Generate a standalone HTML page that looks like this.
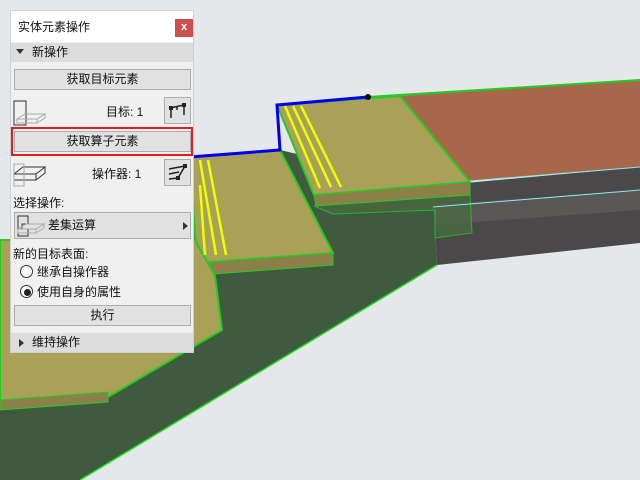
<!DOCTYPE html>
<html><head><meta charset="utf-8"><style>
*{margin:0;padding:0;box-sizing:border-box}
html,body{width:640px;height:480px;overflow:hidden}
body{background:#e4e8ea;position:relative;font-family:"Liberation Sans","Noto Sans CJK SC",sans-serif;font-size:12px;color:#111}
svg.bg{position:absolute;left:0;top:0}
.p{position:absolute;left:10px;top:10px;width:184px;height:343px;background:#f0f0f0;border:1px solid #d0d0d0}
.a{position:absolute}
.btn{position:absolute;left:3px;width:177px;height:21px;background:#e1e1e1;border:1px solid #adadad;text-align:center;line-height:19px}
.hdr{position:absolute;left:0;width:182px;height:19px;background:#dcdcdc;line-height:19px;padding-left:21px}
.ib{position:absolute;left:153px;width:27px;height:27px;background:#e1e1e1;border:1px solid #adadad}
.rad{position:absolute;left:9px;width:13px;height:13px;border:1px solid #333;border-radius:50%;background:#fff}
</style></head><body>
<svg class="bg" width="640" height="480" viewBox="0 0 640 480">
<polygon points="190,157 280,150 433,186 437,265 80,480 0,480 0,250 190,240" fill="#3f5a3e"/>
<polygon points="400,96 640,80 640,167 470,181" fill="#a8674a"/>
<polygon points="433,186 640,167 640,243 437,265" fill="#4a4848"/>
<polygon points="435,205 640,190 640,210 435,225" fill="#5a5756"/>
<polygon points="277,105 400,96 470,182 314,195" fill="#a9a157" stroke="#22cc22" stroke-width="2"/>
<polygon points="314,195 470,182 470,195 316,206" fill="#8d7f4a" stroke="#22cc22"/>
<polygon points="314,206 470,195 472,233 435,238 435,210 333,214" fill="#4a6a40" stroke="#22cc22" opacity=".8"/>
<polygon points="190,157 280,150 333,253 197,263" fill="#a9a157" stroke="#22cc22" stroke-width="2"/>
<polygon points="197,263 333,253 333,265 200,275" fill="#8d7f4a" stroke="#22cc22"/>
<polygon points="0,240 195,240 215,276 222,330 108,397 0,405" fill="#a9a157" stroke="#22cc22" stroke-width="2"/>
<polygon points="0,400 108,392 108,402 0,410" fill="#8d7f4a" stroke="#22cc22"/>
<line x1="437" y1="265" x2="80" y2="480" stroke="#22dd22" stroke-width="1.5"/>
<g stroke="#eeff00" stroke-width="2.5">
<line x1="285" y1="106" x2="320" y2="188"/><line x1="293" y1="106" x2="331" y2="187"/><line x1="301" y1="106" x2="341" y2="187"/>
<line x1="200" y1="160" x2="216" y2="255"/><line x1="208" y1="160" x2="226" y2="255"/><line x1="200" y1="185" x2="205" y2="255"/>
</g>
<polyline points="190,157 280,150 277,105 368,97" fill="none" stroke="#0000ee" stroke-width="3"/>
<line x1="368" y1="97" x2="640" y2="80" stroke="#22cc22" stroke-width="2"/>
<circle cx="368" cy="97" r="3" fill="#000"/>
<line x1="470" y1="181" x2="640" y2="167" stroke="#8ee" stroke-width="1"/>
<line x1="433" y1="207" x2="640" y2="190" stroke="#8ee" stroke-width="1"/>
</svg>
<div class="p">
<div class="a" style="left:0;top:0;width:182px;height:31px;background:#fff"></div>
<div class="a" style="left:7px;top:7px;font-size:12px">实体元素操作</div>
<div class="a" style="left:164px;top:8px;width:18px;height:18px;background:#c9504f;color:#fff;text-align:center;line-height:16px;font-weight:bold;font-size:11px">x</div>
<div class="hdr" style="top:32px">新操作</div>
<div class="a" style="left:5px;top:38px;width:0;height:0;border-left:4px solid transparent;border-right:4px solid transparent;border-top:5px solid #333"></div>
<div class="btn" style="top:58px">获取目标元素</div>
<svg class="a" style="left:2px;top:89px" width="34" height="28"><g fill="none" stroke="#333"><rect x="1" y="1" width="12" height="24"/></g><g fill="none" stroke="#aaa"><path d="M4 19 L12 14 L32 14 L24 19 Z M4 19 v4 h20 v-4 M24 23 L32 18 v-4"/></g></svg>
<div class="a" style="left:95px;top:92px">目标: 1</div>
<div class="ib" style="top:86px"><svg width="25" height="25"><g stroke="#222" stroke-width="1.5" fill="none"><path d="M5 10 L19 7 M6 10 v10 M19 7 v10 M12 9 v3"/></g><g fill="#222"><rect x="4" y="8" width="4" height="4"/><rect x="17" y="5" width="4" height="4"/></g></svg></div>
<div class="a" style="left:0;top:116px;width:182px;height:29px;border:2px solid #e02020"></div>
<div class="btn" style="top:120px">获取算子元素</div>
<svg class="a" style="left:2px;top:150px" width="34" height="28"><g fill="none" stroke="#333"><path d="M1 13 L10 6 L32 6 L23 13 Z M1 13 v6 h22 v-6 M23 19 L32 12 v-6"/></g><g fill="none" stroke="#aaa"><rect x="1" y="3" width="10" height="22"/></g></svg>
<div class="a" style="left:81px;top:154px">操作器: 1</div>
<div class="ib" style="top:148px"><svg width="25" height="25"><g stroke="#222" stroke-width="1.5" fill="none"><path d="M4 9 L20 6 M4 14 L14 12 M4 19 L13 18 M20 6 L13 18"/></g><g fill="#222"><rect x="18" y="4" width="4" height="4"/><rect x="11" y="16" width="4" height="4"/></g></svg></div>
<div class="a" style="left:2px;top:183px">选择操作:</div>
<div class="btn" style="top:201px;height:27px;text-align:left;padding-left:33px;line-height:25px">差集运算</div>
<svg class="a" style="left:5px;top:203px" width="30" height="24"><g fill="none" stroke="#333"><path d="M2 2 h10 v8 h-6 v5 h6 v7 h-10 Z"/></g><g fill="none" stroke="#aaa"><path d="M2 15 L10 10 L28 10 L20 15 Z M2 15 v4 h18 v-4 M20 19 L28 14 v-4"/></g></svg>
<div class="a" style="left:172px;top:211px;border-top:4px solid transparent;border-bottom:4px solid transparent;border-left:5px solid #333"></div>
<div class="a" style="left:2px;top:234px">新的目标表面:</div>
<div class="rad" style="top:254px"></div><div class="a" style="left:26px;top:252px">继承自操作器</div>
<div class="rad" style="top:274px"></div><div class="a" style="left:13px;top:278px;width:7px;height:7px;border-radius:50%;background:#222"></div><div class="a" style="left:26px;top:272px">使用自身的属性</div>
<div class="btn" style="top:294px">执行</div>
<div class="hdr" style="top:322px">维持操作</div>
<div class="a" style="left:8px;top:328px;border-top:4px solid transparent;border-bottom:4px solid transparent;border-left:5px solid #333"></div>
</div>
</body></html>
